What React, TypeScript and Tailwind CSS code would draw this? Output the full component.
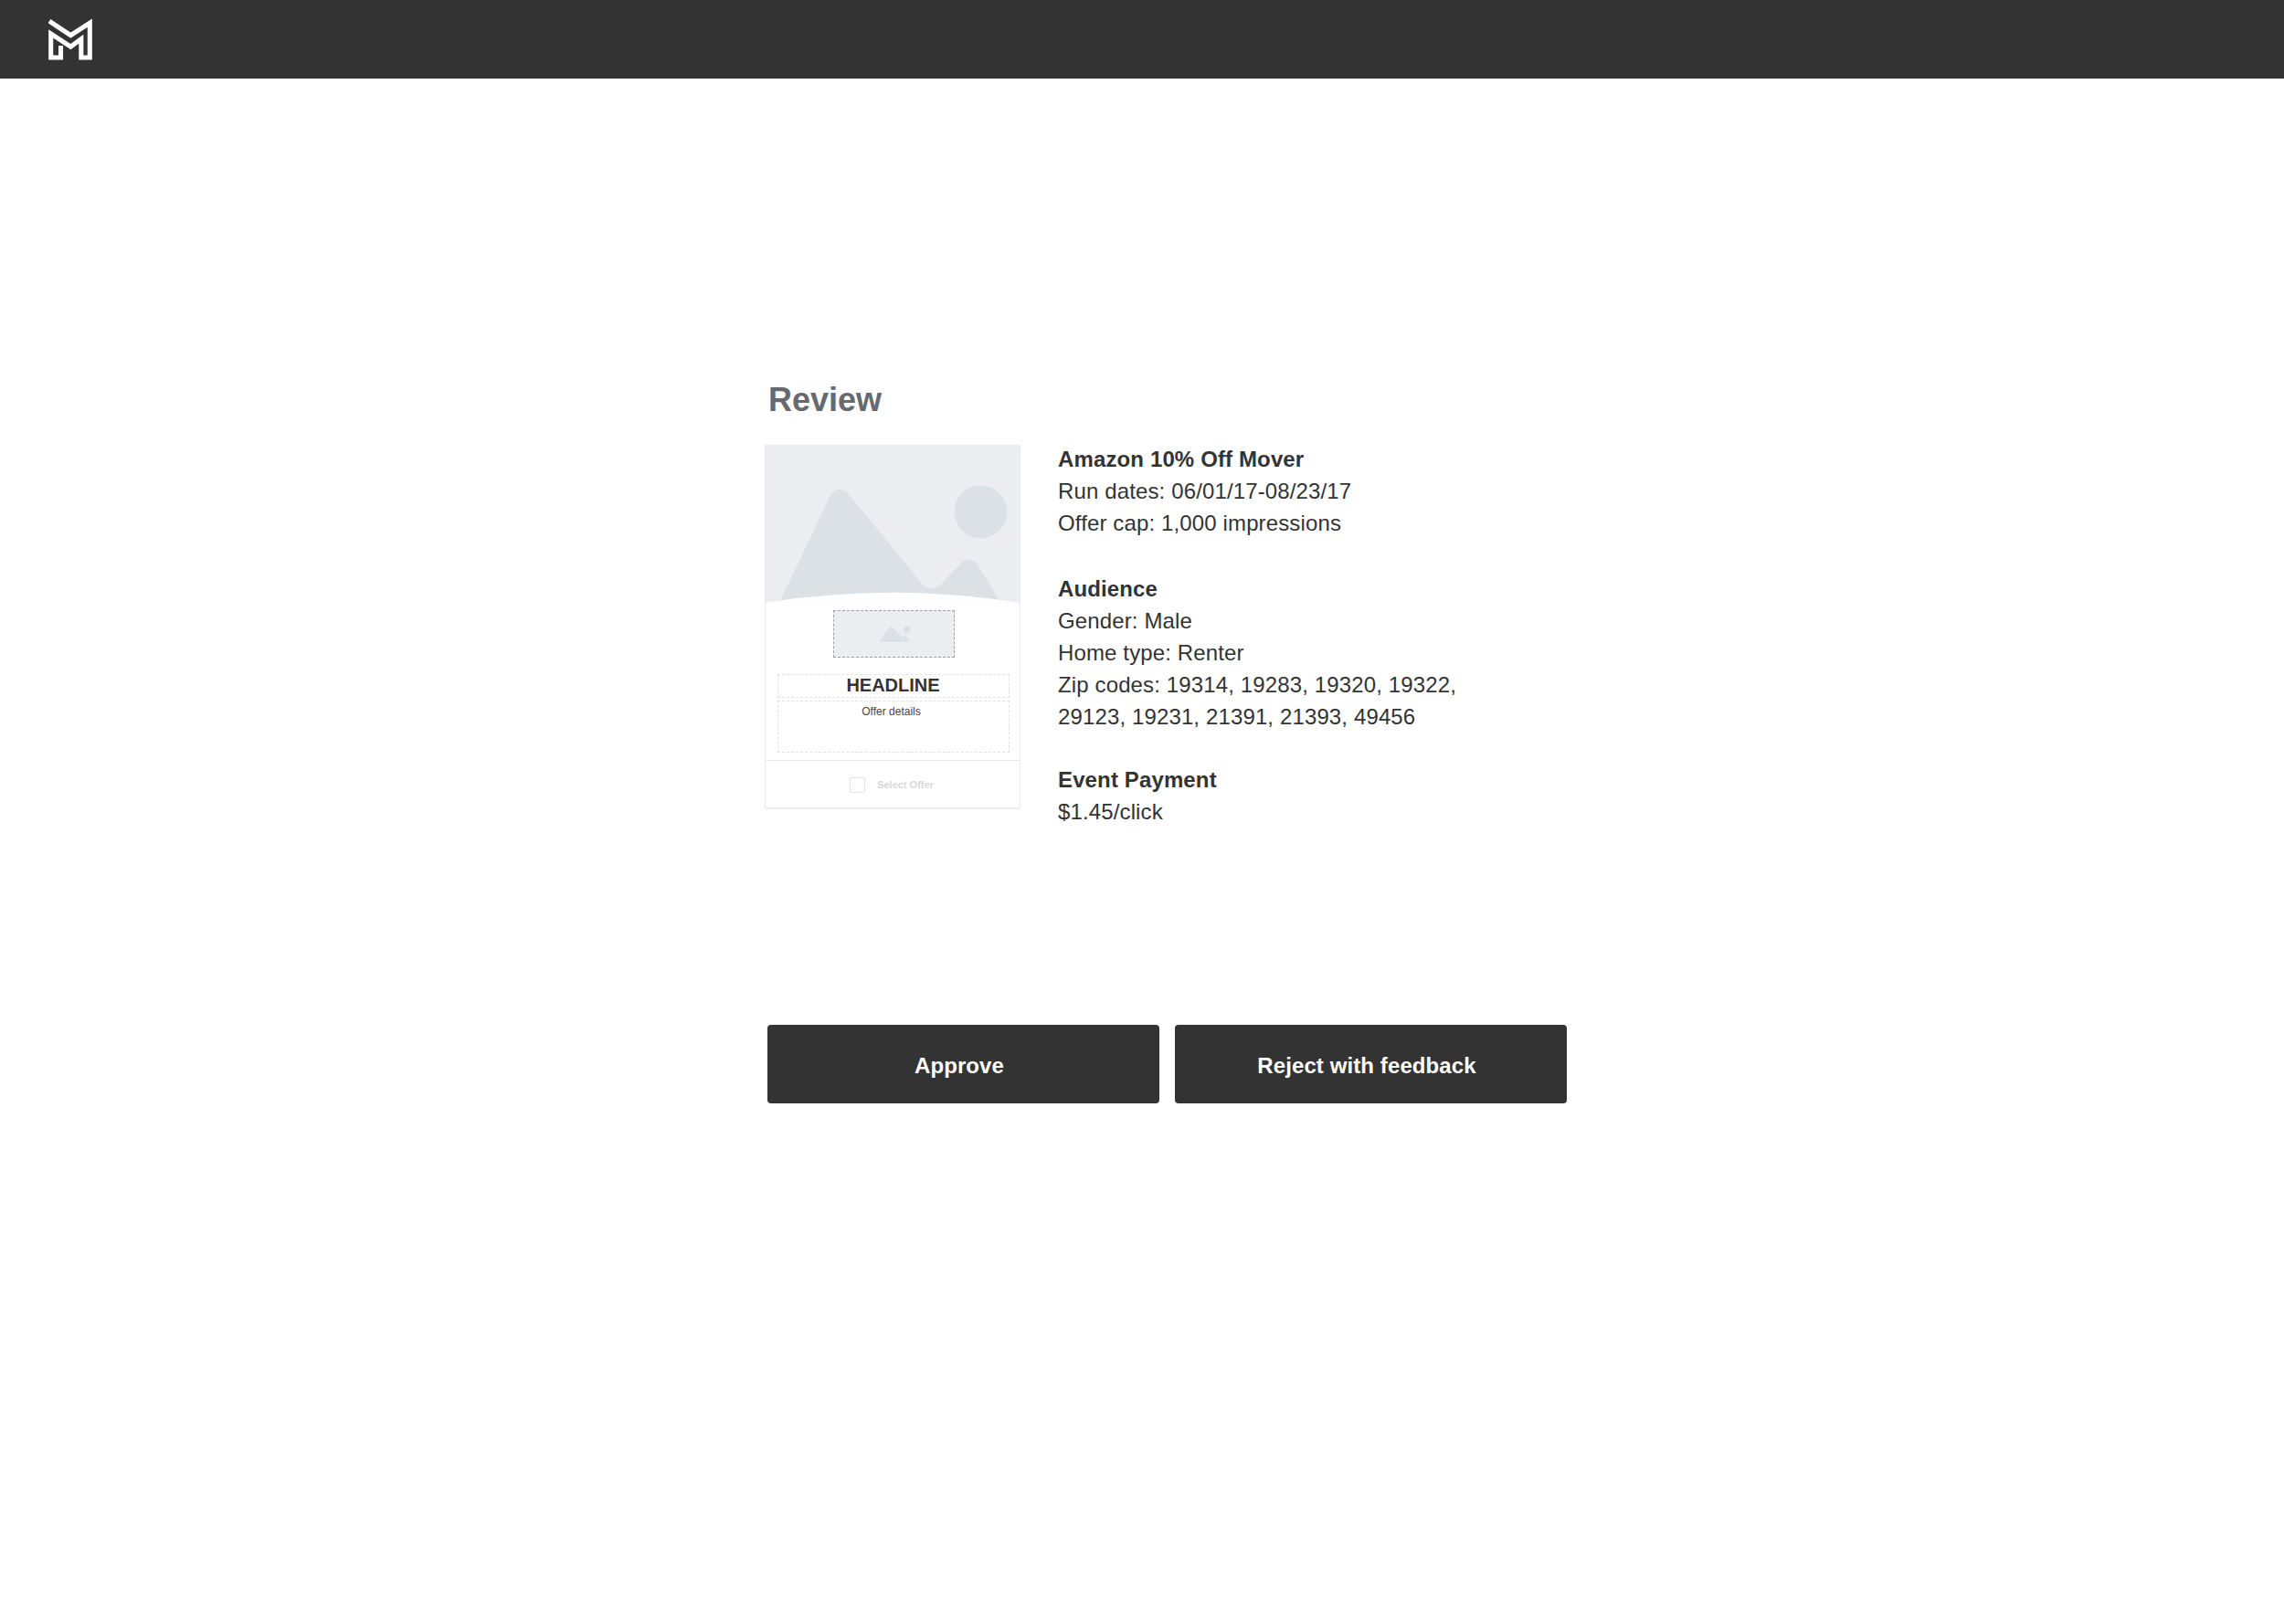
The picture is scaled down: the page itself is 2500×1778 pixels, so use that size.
const Logo = () => (
  <svg viewBox="160 63 142 136" className="w-[48px] h-[46px]" fill="none" stroke="#fff" strokeWidth="15" strokeLinejoin="miter">
    <path d="M163 72 L232 118 L294 78 V190 H266 V130 L232 155 L168 113 V190 H200 V152" />
  </svg>
);

const ImagePlaceholder = () => (
  <svg viewBox="0 0 280 174" className="block w-full">
    <rect width="280" height="174" fill="#ebedf0" />
    <circle cx="237" cy="74" r="29" fill="#dce1e5" />
    <path
      d="M16 172 L71 57 Q81 42 92 55 L174 155 Q182 162 192 155 L215 131 Q224 122 233 131 L258 172 Z"
      fill="#dce1e5"
    />
    <path d="M0 174 Q140 152 280 174 Z" fill="#fff" />
  </svg>
);

const OfferCard = () => (
  <div className="w-[280px] h-[398px] shrink-0 flex flex-col border-x border-b border-[#e8eaec] rounded-b-[2px] shadow-[0_1px_1px_rgba(0,0,0,0.06)]">
    <ImagePlaceholder />
    <div className="flex flex-col items-center pt-[8px]">
      <div className="w-[133px] h-[52px] ml-[3px] flex items-center justify-center bg-[#ebedf0] border border-dashed border-[#a0a0a0]">
        <svg viewBox="0 0 34 18" className="w-[34px] h-[18px]">
          <path d="M0 18 L13 0 L25 13 L29 10 L34 18 Z" fill="#dce1e5" />
          <circle cx="31" cy="4" r="4" fill="#dce1e5" />
        </svg>
      </div>
      <div className="w-[254px] h-[26px] mt-[18px] ml-[1px] pb-[2px] flex items-center justify-center border border-dashed border-[#e2e2e2]">
        <span className="text-[20px] leading-[24px] font-bold text-[#333]">HEADLINE</span>
      </div>
      <div className="w-[254px] h-[57px] mt-[3px] ml-[1px] pr-[4px] pt-[1px] text-center border border-dashed border-[#e2e2e2]">
        <span className="block text-[12px] leading-[20px] text-[#444]">Offer details</span>
      </div>
    </div>
    <div className="mt-[8px] pt-[2px] pr-[2px] flex-1 flex items-center justify-center gap-[13px] border-t border-[#e8eaec]">
      <div className="w-[17px] h-[17px] border border-[#e4e4e4] rounded-[2px]" />
      <span className="text-[11px] font-bold text-[#d8d8d8]">Select Offer</span>
    </div>
  </div>
);

const Details = () => (
  <div className="ml-[41px] -mt-[2px] text-[24px] leading-[35px] text-[#333] tracking-[0.13px]">
    <p className="font-bold">Amazon 10% Off Mover</p>
    <p>Run dates: 06/01/17-08/23/17</p>
    <p>Offer cap: 1,000 impressions</p>
    <p className="font-bold mt-[37px]">Audience</p>
    <p>Gender: Male</p>
    <p>Home type: Renter</p>
    <p>Zip codes: 19314, 19283, 19320, 19322,</p>
    <p>29123, 19231, 21391, 21393, 49456</p>
    <p className="font-bold mt-[34px]">Event Payment</p>
    <p>$1.45/click</p>
  </div>
);

const ActionButton = ({ label }: { label: string }) => (
  <button className="w-[429px] h-[86px] pr-[9px] pt-[4px] rounded-[4px] bg-[#333] text-white text-[24px] font-bold tracking-[0.1px]">
    {label}
  </button>
);

export default function App() {
  return (
    <div className="min-h-screen bg-white font-['Liberation_Sans',Arial,sans-serif]">
      <header className="h-[86px] bg-[#333] flex items-center pl-[53px]">
        <Logo />
      </header>
      <main className="pl-[837px] pt-[330px]">
        <h1 className="ml-[4px] text-[36px] leading-[44px] font-bold text-[#666a6e]">Review</h1>
        <div className="flex mt-[27px]">
          <OfferCard />
          <Details />
        </div>
        <div className="flex gap-[17px] ml-[3px] mt-[216px]">
          <ActionButton label="Approve" />
          <ActionButton label="Reject with feedback" />
        </div>
      </main>
    </div>
  );
}
